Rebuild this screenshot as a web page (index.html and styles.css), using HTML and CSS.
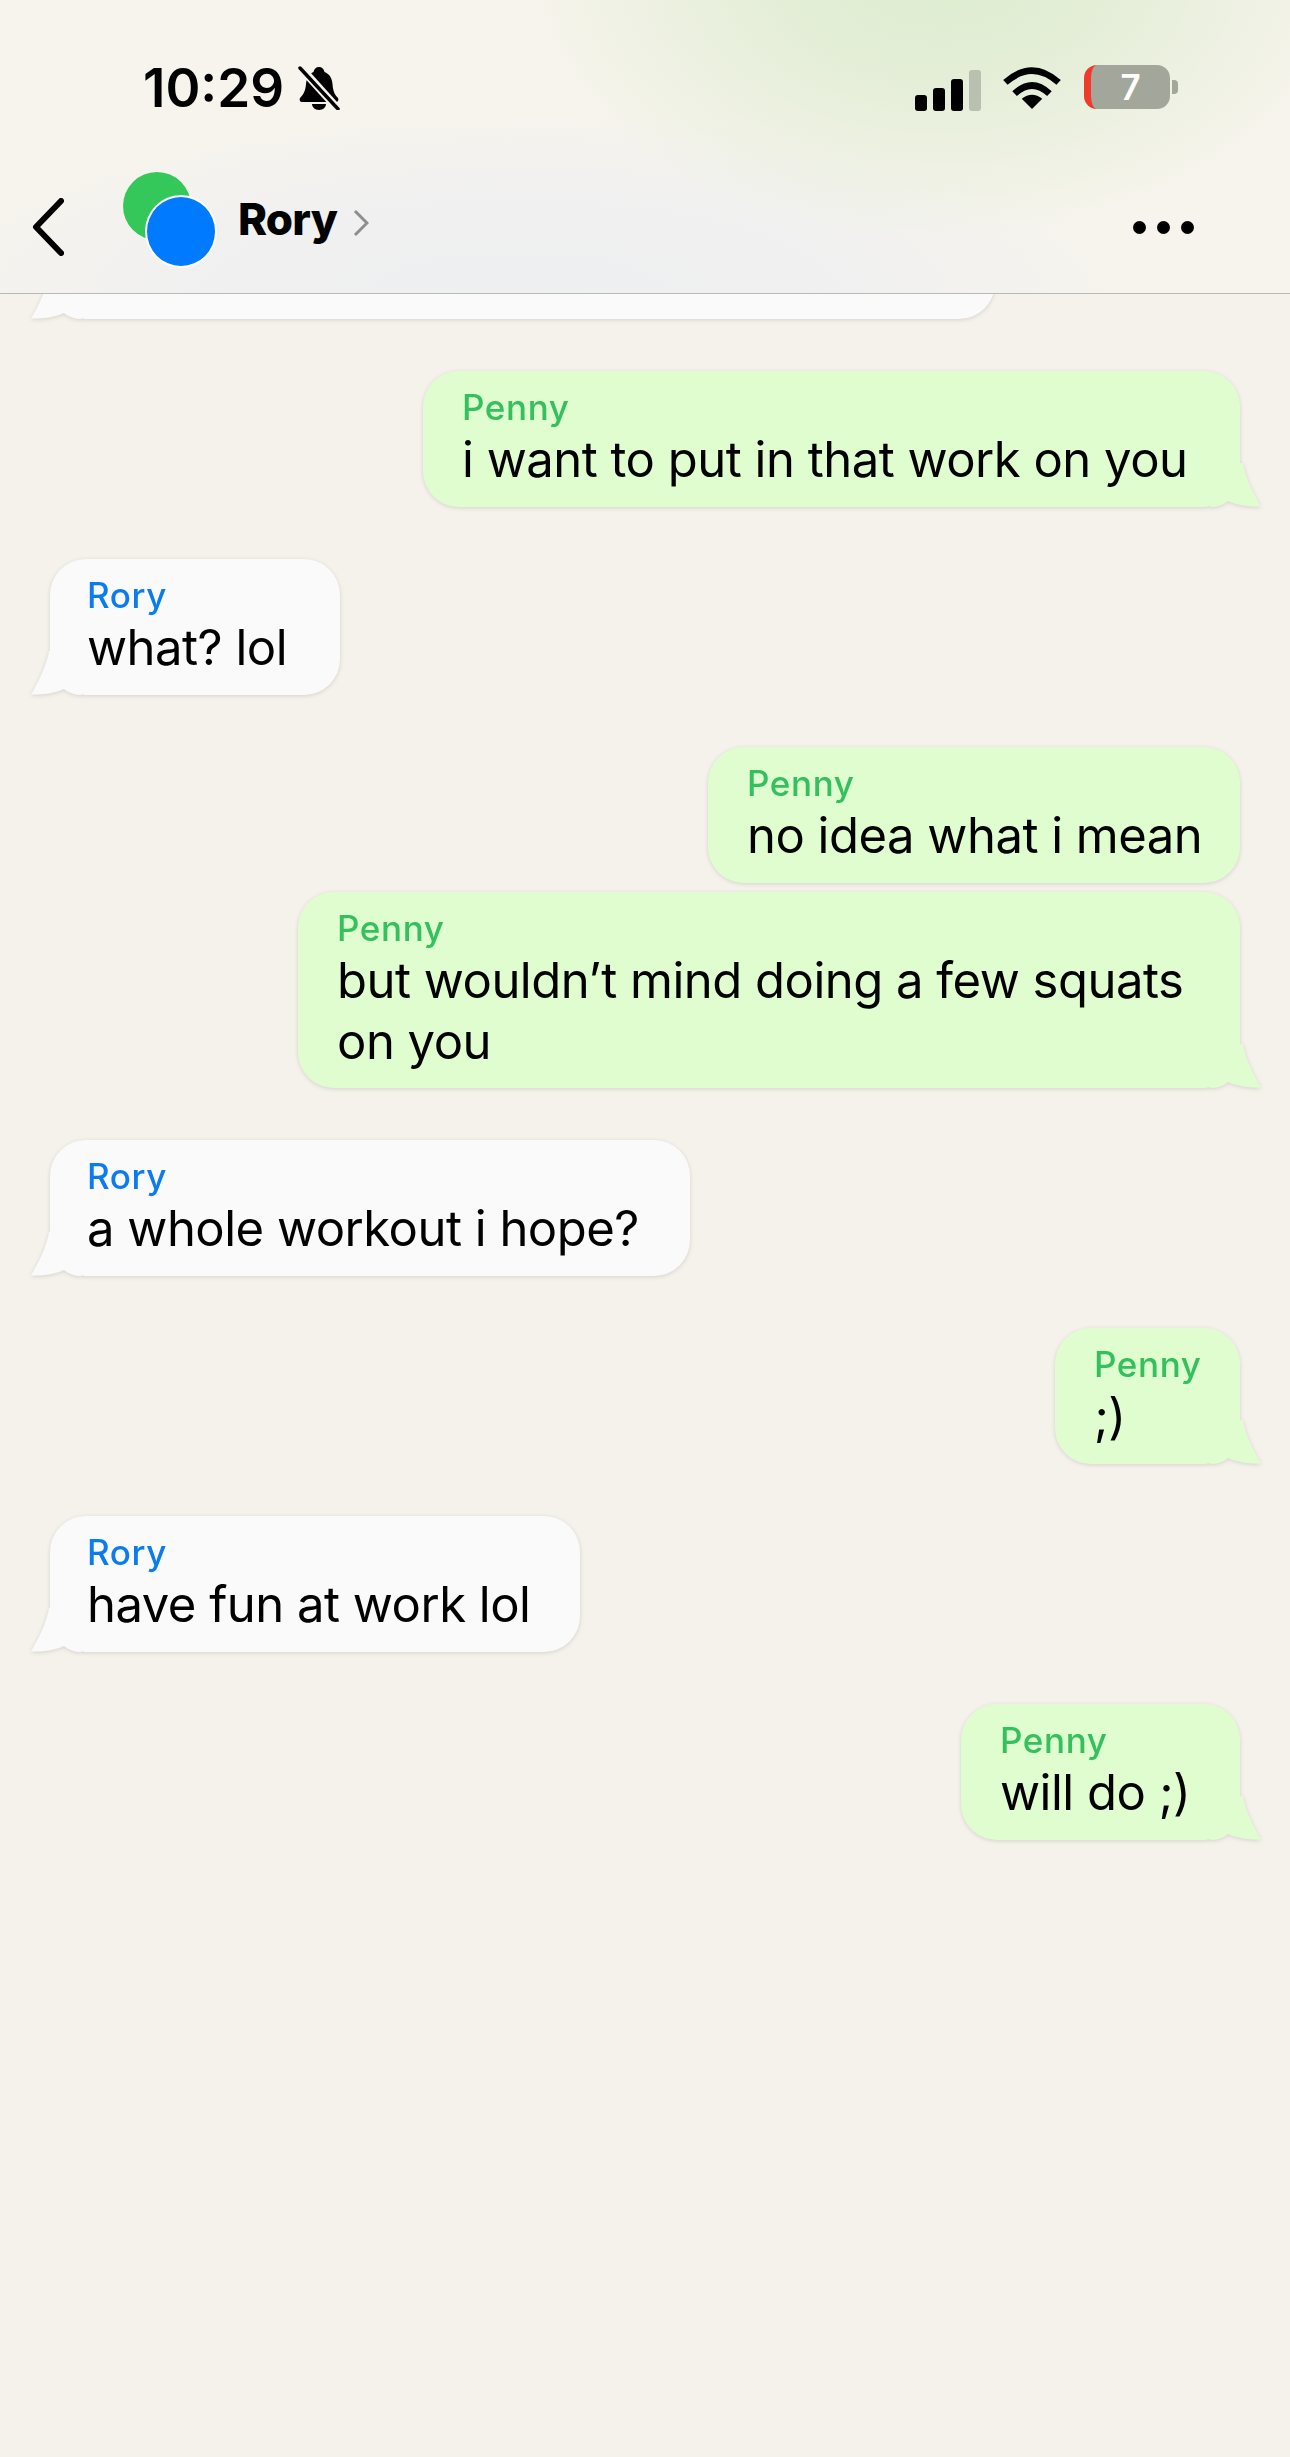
FILE: index.html
```html
<!DOCTYPE html>
<html lang="en">

<head>
  <meta charset="UTF-8">
  <meta name="viewport" content="width=device-width, initial-scale=1.0">
  <title>Rory</title>
  <link rel="stylesheet" href="styles.css">
</head>

<body>
  <svg class="defs" width="0" height="0">
    <symbol id="tail" viewBox="0 0 50 50">
      <path d="M18 6C16 20 7 38 0 49.500C12 50 24 48 33 44C38 48 44 50 50 50L50 6Z" />
    </symbol>
  </svg>

  <div class="header">
    <div class="status">
      <span class="time">10:29</span>
      <svg class="bell" viewBox="0 0 42 44">
        <path d="M21 1c3 0 5 2 5.500 5 5 2 7.500 6 8 12 .5 6 1.500 10 5.500 14 1 2 0 4-2 4H4c-2 0-3-2-2-4 4-4 5.500-8 6-14 .5-6 3-10 7.500-12C16 3 18 1 21 1z" />
        <path d="M14 38h14c0 3-3 6-7 6s-7-3-7-6z" />
        <path class="bell-gap" d="M3 2l37 41" />
        <path class="bell-slash" d="M2 2l38 41" />
      </svg>
      <div class="status-right">
        <div class="signal">
          <i class="bar1"></i>
          <i class="bar2"></i>
          <i class="bar3"></i>
          <i class="bar4"></i>
        </div>
        <svg class="wifi" viewBox="0 0 58 42">
          <path class="wifi-arc" d="M3 16Q29 -7 55 16" />
          <path class="wifi-arc" d="M12 27Q29 11 46 27" />
          <path d="M29 42L19 32Q29 24 39 32Z" />
        </svg>
        <div class="battery">
          <div class="battery-body">7</div>
          <div class="battery-cap"></div>
        </div>
      </div>
    </div>
    <div class="nav">
      <svg class="back" viewBox="0 0 32 58">
        <path d="M29 3L4 29L29 55" />
      </svg>
      <div class="avatars">
        <div class="avatar-green"></div>
        <div class="avatar-blue"></div>
      </div>
      <span class="name">Rory</span>
      <svg class="more-arrow" viewBox="0 0 16 28">
        <path d="M2 2L14 14L2 26" />
      </svg>
      <div class="dots">
        <i></i>
        <i></i>
        <i></i>
      </div>
    </div>
  </div>

  <div class="thread">
    <div class="msg left cut">
      <svg class="tail"><use href="#tail" /></svg>
    </div>

    <div class="msg right w1">
      <div class="sender">Penny</div>
      <div class="text">i want to put in that work on you</div>
      <svg class="tail"><use href="#tail" /></svg>
    </div>

    <div class="msg left w2">
      <div class="sender">Rory</div>
      <div class="text">what? lol</div>
      <svg class="tail"><use href="#tail" /></svg>
    </div>

    <div class="msg right w3">
      <div class="sender">Penny</div>
      <div class="text">no idea what i mean</div>
    </div>

    <div class="msg right w4 next">
      <div class="sender">Penny</div>
      <div class="text">but wouldn’t mind doing a few squats on you</div>
      <svg class="tail"><use href="#tail" /></svg>
    </div>

    <div class="msg left w5">
      <div class="sender">Rory</div>
      <div class="text">a whole workout i hope?</div>
      <svg class="tail"><use href="#tail" /></svg>
    </div>

    <div class="msg right w6">
      <div class="sender">Penny</div>
      <div class="text">;)</div>
      <svg class="tail"><use href="#tail" /></svg>
    </div>

    <div class="msg left w7">
      <div class="sender">Rory</div>
      <div class="text">have fun at work lol</div>
      <svg class="tail"><use href="#tail" /></svg>
    </div>

    <div class="msg right w8">
      <div class="sender">Penny</div>
      <div class="text">will do ;)</div>
      <svg class="tail"><use href="#tail" /></svg>
    </div>
  </div>
</body>

</html>
```

FILE: styles.css
```css
* {
  margin: 0;
  padding: 0;
  box-sizing: border-box;
}

html,
body {
  height: 100%;
}

body {
  display: flex;
  flex-direction: column;
  background-color: #f5f2ec;
  font-family: Inter, "Liberation Sans", sans-serif;
  color: #000;
  overflow: hidden;
}

.defs {
  position: absolute;
}

/* top bar */
.header {
  flex: none;
  height: 294px;
  border-bottom: 1px solid #b9b9b6;
  background:
    radial-gradient(ellipse 420px 270px at 940px -30px, #dcecce 0%, rgba(222, 236, 208, 0.7) 45%, rgba(222, 236, 208, 0) 100%),
    radial-gradient(ellipse 620px 190px at 520px 300px, #eeeff1 0%, rgba(238, 239, 241, 0.75) 55%, rgba(238, 239, 241, 0) 100%),
    #f7f4ed;
}

.status {
  display: flex;
  align-items: center;
  height: 176px;
  padding-left: 143px;
}

.time {
  font-size: 53px;
  font-weight: 600;
}

.bell {
  width: 42px;
  height: 44px;
  margin-left: 14px;
}

.bell-gap {
  fill: none;
  stroke: #f6f3ec;
  stroke-width: 8;
}

.bell-slash {
  fill: none;
  stroke: #000;
  stroke-width: 3.500;
  stroke-linecap: round;
}

.status-right {
  display: flex;
  align-items: center;
  margin-left: auto;
  padding-right: 112px;
}

.signal {
  display: flex;
  align-items: flex-end;
  gap: 6px;
  height: 42px;
  margin-top: 3px;
}

.signal i {
  display: block;
  width: 12px;
  border-radius: 3px;
  background-color: #000;
}

.signal .bar1 {
  height: 16px;
}

.signal .bar2 {
  height: 23px;
}

.signal .bar3 {
  height: 32px;
}

.signal .bar4 {
  height: 41px;
  background-color: #b9c0b0;
}

.wifi {
  width: 60px;
  height: 43px;
  margin-left: 21px;
  margin-top: -2px;
}

.wifi-arc {
  fill: none;
  stroke: #000;
  stroke-width: 6.500;
}

.battery {
  display: flex;
  align-items: center;
  margin-left: 22px;
  margin-top: -3px;
}

.battery-body {
  width: 86px;
  height: 44px;
  border-radius: 13px;
  border-left: 7px solid #f03a2a;
  background-color: #a3a69a;
  color: #fff;
  font-size: 35px;
  font-weight: 600;
  line-height: 44px;
  text-align: center;
}

.battery-cap {
  width: 6px;
  height: 14px;
  margin-left: 2px;
  border-radius: 0 4px 4px 0;
  background-color: #a3a69a;
}

.nav {
  display: flex;
  align-items: center;
  height: 117px;
  padding: 0 96px 29px 32px;
}

.back {
  width: 32px;
  height: 58px;
  margin-top: 14px;
  fill: none;
  stroke: #000;
  stroke-width: 6;
  stroke-linecap: round;
  stroke-linejoin: round;
}

.avatars {
  position: relative;
  width: 94px;
  height: 96px;
  margin-left: 59px;
}

.avatar-green {
  position: absolute;
  left: 0;
  top: 0;
  width: 68px;
  height: 68px;
  border-radius: 50%;
  background-color: #34c759;
}

.avatar-blue {
  position: absolute;
  left: 22px;
  top: 23px;
  width: 72px;
  height: 73px;
  border: 2px solid #fff;
  border-radius: 50%;
  background-color: #007aff;
}

.name {
  margin: -3px 0 0 21px;
  font-size: 44px;
  font-weight: 800;
  letter-spacing: -0.8px;
}

.more-arrow {
  width: 16px;
  height: 28px;
  margin: 6px 0 0 16px;
  fill: none;
  stroke: #8e8e8e;
  stroke-width: 3;
}

.dots {
  display: flex;
  gap: 11px;
  margin: 14px 0 0 auto;
}

.dots i {
  display: block;
  width: 13px;
  height: 13px;
  border-radius: 50%;
  background-color: #000;
}

/* messages */
.thread {
  flex: 1;
  display: flex;
  flex-direction: column;
  overflow: hidden;
}

.msg {
  position: relative;
  flex: none;
  margin-top: 52px;
  padding: 15px 20px 0 38px;
  height: 136px;
  border-radius: 36px;
  filter: drop-shadow(0 1px 2px rgba(0, 0, 0, 0.13));
}

.msg.left {
  align-self: flex-start;
  margin-left: 50px;
  padding-left: 37px;
  background-color: #fafafa;
  fill: #fafafa;
}

.msg.right {
  align-self: flex-end;
  margin-right: 50px;
  padding-left: 39px;
  background-color: #e0fdd0;
  fill: #e0fdd0;
}

.msg.next {
  margin-top: 9px;
}

.msg .tail {
  position: absolute;
  bottom: 0;
  width: 50px;
  height: 50px;
}

.msg.left .tail {
  left: -19px;
}

.msg.right .tail {
  right: -21px;
  transform: scaleX(-1);
}

.sender {
  font-size: 35px;
  font-weight: 500;
  line-height: 43px;
  letter-spacing: 0.6px;
}

.left .sender {
  color: #0a7cf0;
}

.right .sender {
  color: #34c05c;
}

.text {
  font-size: 49px;
  line-height: 61px;
  letter-spacing: -0.5px;
}

.cut {
  width: 945px;
  margin-top: -111px;
}

.w1 {
  width: 817px;
}

.w2 {
  width: 290px;
}

.w3 {
  width: 532px;
}

.w4 {
  width: 942px;
  height: 196px;
}

.w5 {
  width: 640px;
}

.w6 {
  width: 185px;
}

.w7 {
  width: 530px;
}

.w8 {
  width: 279px;
}
```
